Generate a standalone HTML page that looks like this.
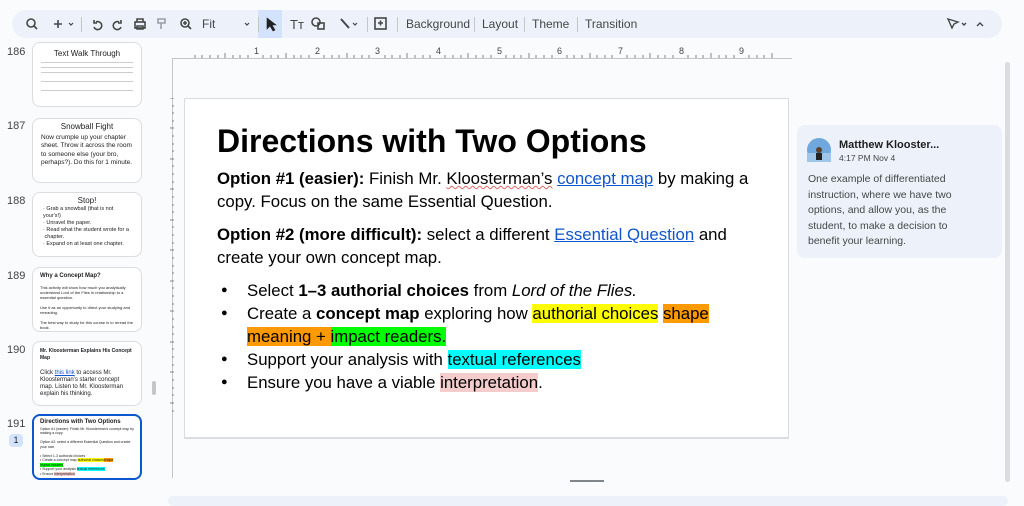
<!DOCTYPE html>
<html><head><meta charset="utf-8"><style>
*{box-sizing:border-box;margin:0;padding:0}
body{width:1024px;height:502px;overflow:hidden;background:#f9fbfd;font-family:"Liberation Sans",Arial,sans-serif;position:relative;color:#202124}
.tb{position:absolute;left:12px;top:10px;width:990px;height:28px;background:#edf2fa;border-radius:14px}
.tb span{position:absolute;top:7px;font-size:12px;color:#444746}
.sep{position:absolute;top:7px;width:1px;height:15px;background:#c4c7c5}
.ic{position:absolute;top:0}
.thumb{position:absolute;left:32px;width:110px;background:#fff;border:1px solid #dadce0;border-radius:8px;overflow:hidden}
.num{position:absolute;left:7px;font-size:11px;color:#444}
.ruler{position:absolute;left:172px;top:46px;width:620px;height:12px}
.slide{position:absolute;left:184px;top:98px;width:605px;height:341px;background:#fff;border:1px solid #dadce0;border-bottom:2px solid #dadce0}
.slide .t{position:absolute;left:32px;top:24px;font-size:32px;font-weight:bold;color:#000}
.body{position:absolute;left:32px;top:68px;width:535px;font-size:16.8px;line-height:23px;color:#000}
.body a{color:#1155cc;text-decoration:underline}
ul{list-style:none;margin-top:10px}
li{position:relative;padding-left:30px}
li:before{content:"●";position:absolute;left:4px;font-size:11px}
.y{background:#ffff00}.o{background:#ff9900}.g{background:#00ff00}.c{background:#00ffff}.p{background:#f4cccc}
.cm{position:absolute;left:797px;top:125px;width:205px;height:133px;background:#edf2fa;border-radius:8px}
</style></head><body>
<div class="tb">
<svg class="ic" width="400" height="28" fill="none" stroke="#444746" stroke-width="1.6">
<circle cx="19" cy="13" r="4"/><path d="M22 16l3 3"/>
<path d="M42 14h8M46 10v8"/><path d="M57 13l2 2 2-2" stroke-width="1.2"/>
<path d="M84 12a4 4 0 1 1-2 5M82 10v3h3"/>
<path d="M107 12a4 4 0 1 0 2 5M109 10v3h-3"/>
<rect x="123" y="12" width="10" height="6"/><path d="M125 12v-3h6v3M125 16h6v3h-6z"/>
<path d="M146 9h7v4h-7zM149 13v6" stroke="#9aa0a6"/>
<circle cx="173" cy="13" r="4"/><path d="M176 16l3 3M171 13h4M173 11v4"/>
<path d="M233 13l2 2 2-2" stroke-width="1.2"/>
</svg>
<div style="position:absolute;left:246px;top:0;width:24px;height:28px;background:#d3e3fd"></div>
<svg class="ic" width="400" height="28" fill="none" stroke="#202124" stroke-width="1.6">
<path d="M255 8l0 11 3-3 3 5 2-1-3-5h4z" fill="#202124" stroke-width="0.6"/>
<text x="278" y="19" font-size="13" fill="#444746" stroke="none" font-family="Liberation Sans">Tт</text>
<circle cx="304" cy="12" r="4" stroke="#444746"/><rect x="306" y="13" width="6" height="6" stroke="#444746"/>
<path d="M329 9l8 9" stroke="#444746" stroke-width="2"/><path d="M341 13l2 2 2-2" stroke-width="1.2" stroke="#444746"/>
<rect x="363" y="8" width="11" height="11" stroke="#444746"/><path d="M366 13h5M368.5 10.5v5" stroke="#444746"/>
</svg>
<div class="sep" style="left:69px"></div>
<div class="sep" style="left:246px"></div><div class="sep" style="left:355px"></div><div class="sep" style="left:385px"></div>
<span style="left:190px">Fit</span>
<span style="left:394px">Background</span><div class="sep" style="left:462px"></div>
<span style="left:470px">Layout</span><div class="sep" style="left:512px"></div>
<span style="left:520px">Theme</span><div class="sep" style="left:565px"></div>
<span style="left:573px">Transition</span>
<svg class="ic" style="left:930px" width="60" height="28" fill="none" stroke="#444746" stroke-width="1.4"><path d="M6 9l10 3-4 2-2 4z"/><path d="M20 13l2 2 2-2"/><path d="M35 16l3-3 3 3"/></svg>
</div>

<div class="num" style="top:46px">186</div>
<div class="thumb" style="top:42px;height:65px"><div style="text-align:center;font-size:8px;margin-top:6px">Text Walk Through</div>
<div style="margin:4px 8px;height:1px;background:#ccc"></div><div style="margin:4px 8px;height:1px;background:#ccc"></div><div style="margin:4px 8px;height:1px;background:#ccc"></div><div style="margin:8px 8px;height:1px;background:#ccc"></div><div style="margin:4px 8px;height:1px;background:#ccc"></div></div>
<div class="num" style="top:120px">187</div>
<div class="thumb" style="top:118px;height:65px;font-size:6.5px;line-height:8.5px;padding:4px 8px"><div style="text-align:center;font-size:8px;margin-bottom:2px">Snowball Fight</div>Now crumple up your chapter sheet. Throw it across the room to someone else (your bro, perhaps?). Do this for 1 minute.</div>
<div class="num" style="top:195px">188</div>
<div class="thumb" style="top:192px;height:65px;font-size:5.5px;line-height:7px;padding:4px 10px"><div style="text-align:center;font-size:8px;margin-bottom:2px">Stop!</div>· Grab a snowball (that is not your's!)<br>· Unravel the paper.<br>· Read what the student wrote for a<br>&nbsp;chapter.<br>· Expand on at least one chapter.</div>
<div class="num" style="top:270px">189</div>
<div class="thumb" style="top:267px;height:65px;font-size:4px;line-height:5px;padding:6px 7px"><div style="font-size:6px;font-weight:bold;margin-bottom:6px">Why a Concept Map?</div>This activity will show how much you analytically understand Lord of the Flies in relationship to a essential question.<br><br>Use it as an opportunity to direct your studying and rereading.<br><br>The best way to study for this course is to reread the book.</div>
<div class="num" style="top:344px">190</div>
<div class="thumb" style="top:341px;height:65px;font-size:6px;line-height:7px;padding:6px 7px"><div style="font-size:5px;font-weight:bold;margin-bottom:8px">Mr. Kloosterman Explains His Concept Map</div>Click <u style="color:#1155cc">this link</u> to access Mr. Kloosterman's starter concept map. Listen to Mr. Kloosterman explain his thinking.</div>
<div style="position:absolute;left:152px;top:381px;width:4px;height:14px;background:#c4c7c5;border-radius:2px"></div>
<div class="num" style="top:418px">191</div>
<div style="position:absolute;left:9px;top:434px;width:14px;height:13px;background:#d3e3fd;border-radius:4px;font-size:9px;text-align:center;line-height:13px">1</div>
<div class="thumb" style="top:414px;height:66px;border:2px solid #0b57d0;padding:4px 6px;font-size:3.5px;line-height:4.5px"><div style="font-size:6px;font-weight:bold;margin-bottom:2px">Directions with Two Options</div>Option #1 (easier): Finish Mr. Kloosterman's concept map by making a copy.<br><br>Option #2: select a different Essential Question and create your own.<br><br>• Select 1-3 authorial choices<br>• Create a concept map <span class="y">authorial choices</span><span class="o">shape</span><br><span class="g">impact readers</span><br>• Support your analysis <span class="c">textual references</span><br>• Ensure <span class="p">interpretation</span></div>

<svg class="ruler" width="620" height="14"><g stroke="#80868b" stroke-width="1">
<path d="M0 12.5H620"/></g>
<g font-size="9" fill="#444" font-family="Liberation Sans">
<text x="82" y="8">1</text><text x="143" y="8">2</text><text x="203" y="8">3</text><text x="264" y="8">4</text><text x="325" y="8">5</text><text x="385" y="8">6</text><text x="446" y="8">7</text><text x="507" y="8">8</text><text x="567" y="8">9</text></g>
<path stroke="#80868b" d="M23 9v3M30 9v3M38 9v3M46 9v3M53 7v5M61 9v3M68 9v3M76 9v3M91 9v3M99 9v3M106 9v3M114 7v5M122 9v3M129 9v3M137 9v3M152 9v3M160 9v3M167 9v3M175 7v5M182 9v3M190 9v3M197 9v3M213 9v3M220 9v3M228 9v3M235 7v5M243 9v3M251 9v3M258 9v3M273 9v3M281 9v3M289 9v3M296 7v5M304 9v3M311 9v3M319 9v3M334 9v3M342 9v3M349 9v3M357 7v5M364 9v3M372 9v3M380 9v3M395 9v3M402 9v3M410 9v3M418 7v5M425 9v3M433 9v3M440 9v3M455 9v3M463 9v3M471 9v3M478 7v5M486 9v3M493 9v3M501 9v3M516 9v3M524 9v3M531 9v3M539 7v5M547 9v3M554 9v3M562 9v3M577 9v3M585 9v3M592 9v3M600 7v5"/></svg>
<div style="position:absolute;left:172px;top:58px;width:1px;height:420px;background:#c4c7c5"></div>
<div style="position:absolute;left:172px;top:58px;width:620px;height:1px;background:#c4c7c5"></div>
<svg style="position:absolute;left:163px;top:98px" width="12" height="340"><path stroke="#80868b" d="M7 0h4M9 8h2M9 15h2M9 23h2M7 30h4M9 38h2M9 46h2M9 53h2M7 61h4M9 68h2M9 76h2M9 84h2M7 91h4M9 99h2M9 107h2M9 114h2M7 122h4M9 129h2M9 137h2M9 145h2M7 152h4M9 160h2M9 168h2M9 175h2M7 183h4M9 190h2M9 198h2M9 206h2M7 213h4M9 221h2M9 229h2M9 236h2M7 244h4M9 251h2M9 259h2M9 267h2M7 274h4M9 282h2M9 290h2M9 297h2M7 305h4M9 313h2"/></svg>

<div class="slide">
<div class="t">Directions with Two Options</div>
<div class="body">
<div><b>Option #1 (easier):</b> Finish Mr. <span style="text-decoration:underline wavy #e06666;text-decoration-thickness:1px">Kloosterman’s</span> <a>concept map</a> by making a copy. Focus on the same Essential Question.</div>
<div style="margin-top:10px"><b>Option #2 (more difficult):</b> select a different <a>Essential Question</a> and create your own concept map.</div>
<ul>
<li>Select <b>1–3 authorial choices</b> from <i>Lord of the Flies.</i></li>
<li>Create a <b>concept map</b> exploring how <span class="y">authorial choices</span> <span class="o">shape meaning + </span><span class="g">impact readers.</span></li>
<li>Support your analysis with <span class="c">textual references</span></li>
<li>Ensure you have a viable <span class="p">interpretation</span>.</li>
</ul></div></div>
<div style="position:absolute;left:570px;top:480px;width:34px;height:2px;background:#80868b"></div>
<div style="position:absolute;left:168px;top:496px;width:840px;height:10px;background:#edf2fa;border-radius:6px"></div>
<div style="position:absolute;left:1005px;top:62px;width:5px;height:420px;background:#dadce0;border-radius:3px"></div>

<div class="cm">
<svg style="position:absolute;left:10px;top:13px" width="24" height="24"><circle cx="12" cy="12" r="12" fill="#6fa8dc"/><rect x="0" y="15" width="24" height="9" fill="#9fc5e8"/><circle cx="12" cy="12" r="3" fill="#5b3f2f"/><rect x="9" y="15" width="6" height="7" fill="#222"/></svg>
<div style="position:absolute;left:42px;top:14px;font-size:11px;font-weight:bold;color:#1f1f1f">Matthew Klooster...</div>
<div style="position:absolute;left:42px;top:28px;font-size:8.5px;color:#444">4:17 PM Nov 4</div>
<div style="position:absolute;left:11px;top:47px;width:160px;font-size:10.5px;line-height:15.5px;color:#444746">One example of differentiated instruction, where we have two options, and allow you, as the student, to make a decision to benefit your learning.</div>
</div>
</body></html>
